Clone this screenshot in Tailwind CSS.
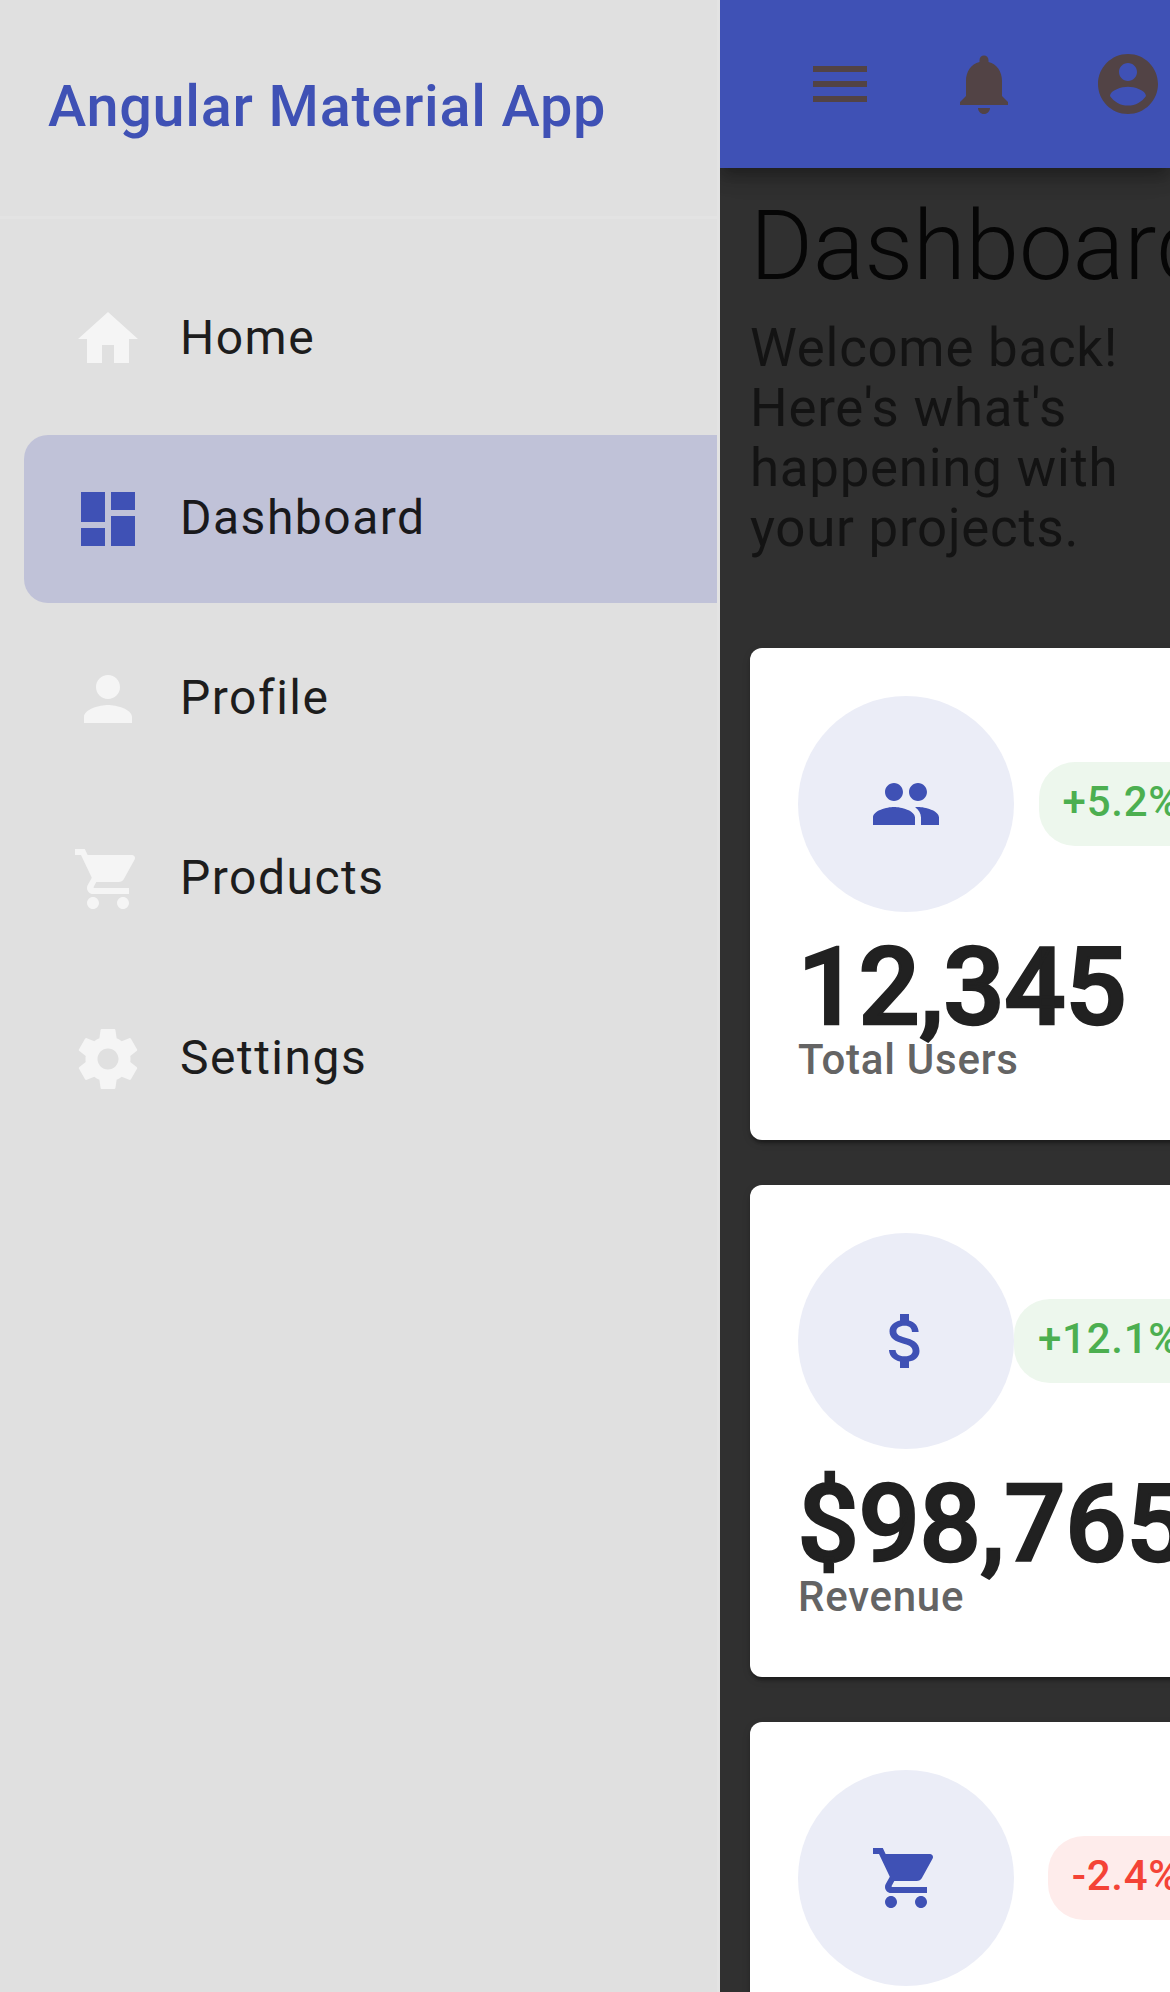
<!DOCTYPE html>
<html lang="en">
<head>
<meta charset="utf-8">
<title>Angular Material App</title>
<script src="https://cdn.jsdelivr.net/npm/@tailwindcss/browser@4"></script>
</head>
<body class="flex h-[1992px] w-[1170px] overflow-hidden bg-[#303030] font-[Roboto,sans-serif]">

<!-- Side navigation -->
<aside class="relative z-10 flex h-full w-[720px] shrink-0 flex-col overflow-hidden border-r-3 border-[#e3e3e3] bg-[#e0e0e0]">
  <header class="flex h-[219px] shrink-0 items-center border-b-3 border-[#e3e3e3] px-12 pb-[2px]">
    <h1 class="text-[57.6px] leading-[96px] font-medium tracking-[0.72px] whitespace-nowrap text-[#3f51b5]">Angular Material App</h1>
  </header>
  <nav class="flex flex-col gap-3 py-9 pl-6 text-5xl tracking-[1.5px] text-[#1d1d1d]">
    <a class="flex h-[168px] items-center gap-9 rounded-l-3xl px-12">
      <svg class="size-[72px] fill-[#f5f5f5]" viewBox="0 0 24 24"><path d="M10 20v-6h4v6h5v-8h3L12 3 2 12h3v8z"/></svg>
      <span class="pb-[3px]">Home</span>
    </a>
    <a class="flex h-[168px] items-center gap-9 rounded-l-3xl bg-[#c0c2d8] px-12 text-[#19191c]">
      <svg class="size-[72px] fill-[#3f51b5]" viewBox="0 0 24 24"><path d="M3 13h8V3H3v10zm0 8h8v-6H3v6zm10 0h8V11h-8v10zm0-18v6h8V3h-8z"/></svg>
      <span class="pb-[3px]">Dashboard</span>
    </a>
    <a class="flex h-[168px] items-center gap-9 rounded-l-3xl px-12">
      <svg class="size-[72px] fill-[#f5f5f5]" viewBox="0 0 24 24"><path d="M12 12c2.210 0 4-1.790 4-4s-1.790-4-4-4-4 1.790-4 4 1.790 4 4 4zm0 2c-2.670 0-8 1.340-8 4v2h16v-2c0-2.660-5.330-4-8-4z"/></svg>
      <span class="pb-[3px]">Profile</span>
    </a>
    <a class="flex h-[168px] items-center gap-9 rounded-l-3xl px-12">
      <svg class="size-[72px] fill-[#f5f5f5]" viewBox="0 0 24 24"><path d="M7 18c-1.100 0-1.990.9-1.990 2S5.900 22 7 22s2-.9 2-2-.9-2-2-2zM1 2v2h2l3.600 7.590-1.350 2.450c-.16.28-.25.61-.25.96 0 1.100.9 2 2 2h12v-2H7.420c-.14 0-.25-.11-.25-.25l.03-.12.9-1.630h7.450c.75 0 1.410-.41 1.750-1.030l3.580-6.490c.08-.14.12-.31.12-.48 0-.55-.45-1-1-1H5.210l-.94-2H1zm16 16c-1.100 0-1.990.9-1.990 2s.89 2 1.990 2 2-.9 2-2-.9-2-2-2z"/></svg>
      <span class="pb-[3px]">Products</span>
    </a>
    <a class="flex h-[168px] items-center gap-9 rounded-l-3xl px-12">
      <svg class="size-[72px] fill-[#f5f5f5]" viewBox="0 0 24 24"><path d="M19.430 12.980c.04-.32.07-.64.07-.98s-.03-.66-.07-.98l2.110-1.650c.19-.15.24-.42.12-.64l-2-3.460c-.12-.22-.39-.3-.61-.22l-2.490 1c-.52-.4-1.080-.73-1.690-.98l-.38-2.650C14.460 2.180 14.250 2 14 2h-4c-.25 0-.46.18-.49.42l-.38 2.650c-.61.25-1.170.59-1.690.98l-2.490-1c-.23-.09-.49 0-.61.22l-2 3.460c-.13.22-.07.49.12.64l2.110 1.650c-.04.32-.07.65-.07.98s.03.66.07.98l-2.110 1.650c-.19.15-.24.42-.12.64l2 3.460c.12.22.39.3.61.22l2.490-1c.52.4 1.080.73 1.690.98l.38 2.650c.03.24.24.42.49.42h4c.25 0 .46-.18.49-.42l.38-2.650c.61-.25 1.170-.59 1.690-.98l2.490 1c.23.09.49 0 .61-.22l2-3.460c.12-.22.07-.49-.12-.64l-2.110-1.650zM12 15.500c-1.930 0-3.500-1.570-3.500-3.500s1.570-3.500 3.500-3.500 3.500 1.570 3.500 3.500-1.570 3.500-3.500 3.500z"/></svg>
      <span class="pb-[3px]">Settings</span>
    </a>
  </nav>
</aside>

<div class="flex h-full w-[450px] shrink-0 flex-col">
  <!-- Toolbar -->
  <header class="flex h-[168px] w-[450px] shrink-0 items-center overflow-visible bg-[#3f51b5] pl-12 shadow-[0_6px_12px_-3px_rgba(0,0,0,0.2),0_12px_15px_0_rgba(0,0,0,0.14),0_3px_30px_0_rgba(0,0,0,0.12)]">
    <button class="flex size-36 shrink-0 items-center justify-center" aria-label="Menu">
      <svg class="size-[72px] fill-[#524345]" viewBox="0 0 24 24"><path d="M3 18h18v-2H3v2zm0-5h18v-2H3v2zm0-7v2h18V6H3z"/></svg>
    </button>
    <button class="flex size-36 shrink-0 items-center justify-center" aria-label="Notifications">
      <svg class="size-[72px] fill-[#524345]" viewBox="0 0 24 24"><path d="M12 22c1.100 0 2-.9 2-2h-4c0 1.100.89 2 2 2zm6-6v-5c0-3.070-1.640-5.640-4.500-6.320V4c0-.83-.67-1.500-1.500-1.500s-1.500.67-1.500 1.500v.68C7.630 5.360 6 7.920 6 11v5l-2 2v1h16v-1l-2-2z"/></svg>
    </button>
    <button class="flex size-36 shrink-0 items-center justify-center" aria-label="Account">
      <svg class="size-[72px] fill-[#524345]" viewBox="0 0 24 24"><path d="M12 2C6.480 2 2 6.480 2 12s4.480 10 10 10 10-4.480 10-10S17.520 2 12 2zm0 3c1.660 0 3 1.340 3 3s-1.340 3-3 3-3-1.340-3-3 1.340-3 3-3zm0 14.200c-2.500 0-4.710-1.280-6-3.220.03-1.990 4-3.080 6-3.080 1.990 0 5.970 1.090 6 3.080-1.290 1.940-3.500 3.220-6 3.220z"/></svg>
    </button>
  </header>

  <main class="flex flex-col px-[30px] pt-[30px]">
    <h2 class="text-8xl leading-[96px] font-light text-[#060606]">Dashboard</h2>
    <p class="mt-6 mb-[90px] text-[52.8px] leading-[60px] tracking-[0.75px] text-[#131313]">Welcome back! Here's what's happening with your projects.</p>

    <div class="flex w-[502px] flex-col gap-[45px]">
      <section class="h-[492px] rounded-xl bg-white p-12 shadow-[0_6px_3px_-3px_rgba(0,0,0,0.2),0_3px_3px_0_rgba(0,0,0,0.14),0_3px_9px_0_rgba(0,0,0,0.12)]">
        <div class="flex items-center justify-between">
          <div class="flex size-[216px] shrink-0 items-center justify-center rounded-full bg-[#ebedf7]">
            <svg class="size-[72px] fill-[#3f51b5]" viewBox="0 0 24 24"><path d="M16 11c1.660 0 2.990-1.340 2.990-3S17.660 5 16 5c-1.660 0-3 1.340-3 3s1.340 3 3 3zm-8 0c1.660 0 2.990-1.340 2.990-3S9.660 5 8 5C6.340 5 5 6.340 5 8s1.340 3 3 3zm0 2c-2.330 0-7 1.170-7 3.500V19h14v-2.500c0-2.330-4.670-3.500-7-3.500zm8 0c-.29 0-.62.020-.97.050 1.160.84 1.970 1.970 1.970 3.450V19h6v-2.500c0-2.330-4.670-3.500-7-3.500z"/></svg>
          </div>
          <span class="h-[84px] rounded-[36px] bg-[#edf7ed] px-6 text-[42px] leading-[80px] font-medium tracking-[0.75px] text-[#4caf50]">+5.2%</span>
        </div>
        <div class="mt-[21px] mb-px -ml-[0.5px] text-[108px] leading-[108px] font-medium tracking-[-0.4px] text-[#212121] [-webkit-text-stroke:2.5px_#212121]">12,345</div>
        <div class="text-[42px] leading-9 font-medium tracking-[0.75px] text-[#646464]">Total Users</div>
      </section>

      <section class="h-[492px] rounded-xl bg-white p-12 shadow-[0_6px_3px_-3px_rgba(0,0,0,0.2),0_3px_3px_0_rgba(0,0,0,0.14),0_3px_9px_0_rgba(0,0,0,0.12)]">
        <div class="flex items-center justify-between">
          <div class="flex size-[216px] shrink-0 items-center justify-center rounded-full bg-[#ebedf7]">
            <svg class="size-[72px] fill-[#3f51b5]" viewBox="0 0 24 24"><path d="M11.800 10.900c-2.270-.59-3-1.200-3-2.150 0-1.090 1.010-1.850 2.700-1.850 1.780 0 2.440.85 2.500 2.100h2.210c-.07-1.720-1.120-3.300-3.210-3.810V3h-3v2.160c-1.940.42-3.500 1.680-3.500 3.610 0 2.310 1.910 3.460 4.700 4.130 2.500.6 3 1.480 3 2.410 0 .69-.49 1.790-2.700 1.790-2.060 0-2.870-.92-2.980-2.100h-2.200c.12 2.190 1.760 3.420 3.680 3.830V21h3v-2.150c1.950-.37 3.500-1.500 3.500-3.550 0-2.840-2.430-3.810-4.700-4.400z"/></svg>
          </div>
          <span class="h-[84px] rounded-[36px] bg-[#edf7ed] px-6 text-[42px] leading-[80px] font-medium tracking-[0.75px] text-[#4caf50]">+12.1%</span>
        </div>
        <div class="mt-[21px] mb-px -ml-[0.5px] text-[108px] leading-[108px] font-medium tracking-[-0.4px] text-[#212121] [-webkit-text-stroke:2.5px_#212121]">$98,765</div>
        <div class="text-[42px] leading-9 font-medium tracking-[0.75px] text-[#646464]">Revenue</div>
      </section>

      <section class="h-[492px] rounded-xl bg-white p-12 shadow-[0_6px_3px_-3px_rgba(0,0,0,0.2),0_3px_3px_0_rgba(0,0,0,0.14),0_3px_9px_0_rgba(0,0,0,0.12)]">
        <div class="flex items-center justify-between">
          <div class="flex size-[216px] shrink-0 items-center justify-center rounded-full bg-[#ebedf7]">
            <svg class="size-[72px] fill-[#3f51b5]" viewBox="0 0 24 24"><path d="M7 18c-1.100 0-1.990.9-1.990 2S5.900 22 7 22s2-.9 2-2-.9-2-2-2zM1 2v2h2l3.600 7.590-1.350 2.450c-.16.28-.25.61-.25.96 0 1.100.9 2 2 2h12v-2H7.420c-.14 0-.25-.11-.25-.25l.03-.12.9-1.630h7.450c.75 0 1.410-.41 1.750-1.030l3.580-6.490c.08-.14.12-.31.12-.48 0-.55-.45-1-1-1H5.210l-.94-2H1zm16 16c-1.100 0-1.990.9-1.990 2s.89 2 1.990 2 2-.9 2-2-.9-2-2-2z"/></svg>
          </div>
          <span class="h-[84px] rounded-[36px] bg-[#feeceb] px-6 text-[42px] leading-[80px] font-medium tracking-[0.75px] text-[#f44336]">-2.4%</span>
        </div>
      </section>
    </div>
  </main>
</div>
</body>
</html>
